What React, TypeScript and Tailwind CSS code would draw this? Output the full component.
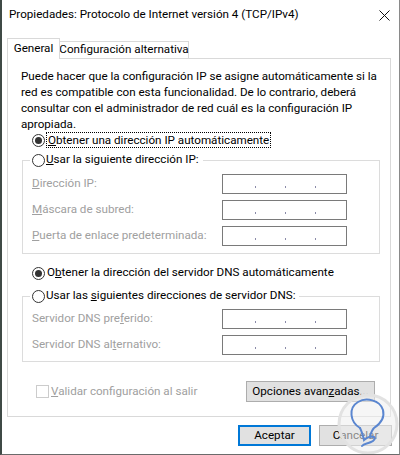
import React from 'react';

// Windows 10 "Propiedades: Protocolo de Internet versión 4" dialog

function Radio({ checked }: { checked?: boolean }) {
  return (
    <span className="w-[13px] h-[13px] rounded-full border border-[#333333] bg-white flex items-center justify-center shrink-0">
      {checked && <span className="w-[7px] h-[7px] rounded-full bg-[#333333]" />}
    </span>
  );
}

function IpBox() {
  return (
    <div className="w-[125px] h-[20px] border border-[#7a7a7a] bg-white flex items-end pb-[5px] pl-[32px] gap-[29px]">
      <span className="w-px h-[2px] bg-[#8a8aa8]" />
      <span className="w-px h-[2px] bg-[#8a8aa8]" />
      <span className="w-px h-[2px] bg-[#8a8aa8]" />
    </div>
  );
}

function FieldRow({ children }: { children: React.ReactNode }) {
  return (
    <div className="grid grid-cols-[192px_125px] items-center h-[20px]">
      <span className="pl-[2px] text-[#a0a0a0] whitespace-nowrap">{children}</span>
      <IpBox />
    </div>
  );
}

function Button({ children, primary, className = '' }: { children: React.ReactNode; primary?: boolean; className?: string }) {
  return (
    <div
      className={
        'h-[21px] flex items-center justify-center bg-[#e1e1e1] ' +
        (primary ? 'border-2 border-[#0078d7] ' : 'border border-[#adadad] ') +
        className
      }
    >
      {children}
    </div>
  );
}

function Watermark() {
  return (
    <svg className="absolute left-[334px] top-[392px]" width="64" height="63" viewBox="0 0 64 63">
      <circle cx="32" cy="32" r="29" fill="#eeeeee" fillOpacity="0.55" stroke="#e2e2e2" strokeWidth="3" />
      <path
        d="M24 36 C14 30 12 16 22 10 C30 5 44 8 47 18 C49 26 44 32 38 36 C36 38 35 41 34 44"
        fill="none"
        stroke="#5a86d0"
        strokeWidth="2"
        strokeLinecap="round"
      />
      <path
        d="M24 36 C26 40 27 44 28 48 C30 46 34 44 38 45 C40 46 38 49 35 50 C31 52 28 51 26 54"
        fill="none"
        stroke="#5a86d0"
        strokeWidth="2"
        strokeLinecap="round"
      />
    </svg>
  );
}

export default function App() {
  return (
    <div className="relative w-[400px] h-[455px] overflow-hidden bg-white border-l-2 border-l-[#3f4a46] border-r border-r-[#8a8a8a] border-b border-b-[#6b6b6b] text-[11.65px] text-black font-['Roboto',sans-serif]">
      {/* Title bar */}
      <div className="h-[30px] flex items-center justify-between pl-[7px] pr-[9px]">
        <span className="whitespace-nowrap">Propiedades: Protocolo de Internet versión 4 (TCP/IPv4)</span>
        <svg width="11" height="11" viewBox="0 0 11 11">
          <path d="M0.5 0.5 L10.5 10.5 M10.5 0.5 L0.5 10.5" stroke="#111111" strokeWidth="1" />
        </svg>
      </div>

      {/* Tabs */}
      <div className="mt-[8px] ml-[5px] h-[20px] flex items-end">
        <div className="relative z-10 -mb-px w-[53px] h-[21px] bg-white border-x border-t border-[#d9d9d9] flex items-center justify-center pb-[1px]">
          General
        </div>
        <div className="w-[129px] h-[17px] bg-white border-t border-r border-[#d9d9d9] flex items-center justify-center">
          <span className="whitespace-nowrap">Configuración alternativa</span>
        </div>
      </div>

      {/* Panel */}
      <div className="ml-[5px] w-[384px] border border-[#d9d9d9] pt-[9px] pb-[14px]">
        <p className="pl-[13px] leading-[16px] whitespace-nowrap">
          Puede hacer que la configuración IP se asigne automáticamente si la
          <br />
          red es compatible con esta funcionalidad. De lo contrario, deberá
          <br />
          consultar con el administrador de red cuál es la configuración IP
          <br />
          apropiada.
        </p>

        <div className="h-[16px] ml-[24px] flex items-center gap-[1px]">
          <Radio checked />
          <span className="border border-dotted border-black px-[1px] leading-[14px] whitespace-nowrap">
            <u>O</u>btener una dirección IP automáticamente
          </span>
        </div>

        <fieldset className="mt-[4px] ml-[14px] w-[358px] border border-[#dcdcdc] px-[7px] pt-[6px] pb-[7px]">
          <legend className="pl-[2px] pr-[4px]">
            <span className="h-[16px] flex items-center gap-[1px]">
              <Radio />
              <span className="whitespace-nowrap">
                <u>U</u>sar la siguiente dirección IP:
              </span>
            </span>
          </legend>
          <div className="flex flex-col gap-[6px]">
            <FieldRow>
              <u>D</u>irección IP:
            </FieldRow>
            <FieldRow>
              <u>M</u>áscara de subred:
            </FieldRow>
            <FieldRow>
              <u>P</u>uerta de enlace predeterminada:
            </FieldRow>
          </div>
        </fieldset>

        <div className="mt-[11px] h-[16px] ml-[24px] flex items-center gap-[2px]">
          <Radio checked />
          <span className="whitespace-nowrap">
            O<u>b</u>tener la dirección del servidor DNS automáticamente
          </span>
        </div>

        <fieldset className="mt-[7px] ml-[14px] w-[358px] border border-[#dcdcdc] px-[7px] pt-[5px] pb-[6px]">
          <legend className="pl-[2px] pr-[4px]">
            <span className="h-[16px] flex items-center gap-[1px]">
              <Radio />
              <span className="whitespace-nowrap">
                Usar las <u>s</u>iguientes direcciones de servidor DNS:
              </span>
            </span>
          </legend>
          <div className="flex flex-col gap-[6px]">
            <FieldRow>
              Servidor DNS pre<u>f</u>erido:
            </FieldRow>
            <FieldRow>
              Servidor DNS al<u>t</u>ernativo:
            </FieldRow>
          </div>
        </fieldset>

        <div className="mt-[19px] flex items-center justify-between pl-[28px] pr-[15px]">
          <div className="flex items-center gap-[2px]">
            <span className="w-[13px] h-[13px] border border-[#cccccc] bg-white" />
            <span className="text-[#a0a0a0] whitespace-nowrap">
              <u>V</u>alidar configuración al salir
            </span>
          </div>
          <Button className="w-[129px]">
            Opciones avan<u>z</u>adas...
          </Button>
        </div>
      </div>

      {/* Dialog buttons */}
      <div className="mt-[8px] flex justify-end gap-[8px] pr-[7px]">
        <Button primary className="w-[73px]">
          Aceptar
        </Button>
        <Button className="w-[73px]">Cancelar</Button>
      </div>

      <Watermark />
    </div>
  );
}
